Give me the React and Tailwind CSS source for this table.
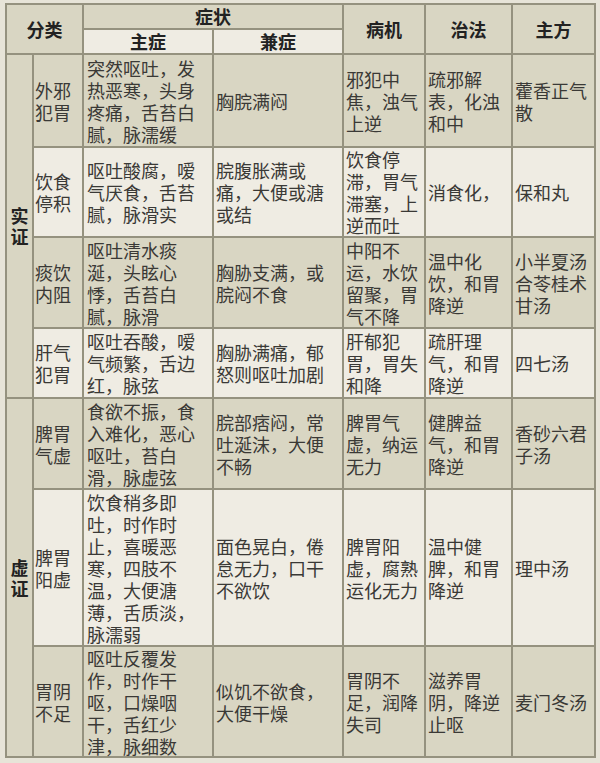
import React from "react";

const rows = [
  {
    name: ["外邪", "犯胃"],
    main: ["突然呕吐，发", "热恶寒，头身", "疼痛，舌苔白", "腻，脉濡缓"],
    side: ["胸脘满闷"],
    cause: ["邪犯中", "焦，浊气", "上逆"],
    cure: ["疏邪解", "表，化浊", "和中"],
    recipe: ["藿香正气", "散"],
    light: false,
  },
  {
    name: ["饮食", "停积"],
    main: ["呕吐酸腐，嗳", "气厌食，舌苔", "腻，脉滑实"],
    side: ["脘腹胀满或", "痛，大便或溏", "或结"],
    cause: ["饮食停", "滞，胃气", "滞塞，上", "逆而吐"],
    cure: ["消食化，"],
    recipe: ["保和丸"],
    light: true,
  },
  {
    name: ["痰饮", "内阻"],
    main: ["呕吐清水痰", "涎，头眩心", "悸，舌苔白", "腻，脉滑"],
    side: ["胸胁支满，或", "脘闷不食"],
    cause: ["中阳不", "运，水饮", "留聚，胃", "气不降"],
    cure: ["温中化", "饮，和胃", "降逆"],
    recipe: ["小半夏汤", "合苓桂术", "甘汤"],
    light: false,
  },
  {
    name: ["肝气", "犯胃"],
    main: ["呕吐吞酸，嗳", "气频繁，舌边", "红，脉弦"],
    side: ["胸胁满痛，郁", "怒则呕吐加剧"],
    cause: ["肝郁犯", "胃，胃失", "和降"],
    cure: ["疏肝理", "气，和胃", "降逆"],
    recipe: ["四七汤"],
    light: true,
  },
  {
    name: ["脾胃", "气虚"],
    main: ["食欲不振，食", "入难化，恶心", "呕吐，苔白", "滑，脉虚弦"],
    side: ["脘部痞闷，常", "吐涎沫，大便", "不畅"],
    cause: ["脾胃气", "虚，纳运", "无力"],
    cure: ["健脾益", "气，和胃", "降逆"],
    recipe: ["香砂六君", "子汤"],
    light: false,
  },
  {
    name: ["脾胃", "阳虚"],
    main: ["饮食稍多即", "吐，时作时", "止，喜暖恶", "寒，四肢不", "温，大便溏", "薄，舌质淡，", "脉濡弱"],
    side: ["面色晃白，倦", "怠无力，口干", "不欲饮"],
    cause: ["脾胃阳", "虚，腐熟", "运化无力"],
    cure: ["温中健", "脾，和胃", "降逆"],
    recipe: ["理中汤"],
    light: true,
  },
  {
    name: ["胃阴", "不足"],
    main: ["呕吐反覆发", "作，时作干", "呕，口燥咽", "干，舌红少", "津，脉细数"],
    side: ["似饥不欲食，", "大便干燥"],
    cause: ["胃阴不", "足，润降", "失司"],
    cure: ["滋养胃", "阴，降逆", "止呕"],
    recipe: ["麦门冬汤"],
    light: false,
  },
];

const Lines = ({ lines }) =>
  lines.map((l, i) => (
    <span key={i} className="block whitespace-nowrap">
      {l}
    </span>
  ));

const Cell = ({ lines, light, pad = "pl-[3px]" }) => (
  <div
    className={`flex items-center ${pad} text-[18px] leading-[22px] text-[#3a3936] ${
      light ? "bg-[#efece3]" : "bg-[#d9d6c3]"
    }`}
  >
    <div>
      <Lines lines={lines} />
    </div>
  </div>
);

const Head = ({ children, className = "" }) => (
  <div
    className={`flex items-center justify-center bg-[#d9d6c3] text-[18px] font-bold text-[#222] ${className}`}
  >
    {children}
  </div>
);

const Group = ({ label, span }) => (
  <div
    className={`flex flex-col items-center justify-center bg-[#d9d6c3] text-[18px] leading-[21px] font-bold text-[#222] ${span}`}
  >
    <Lines lines={label} />
  </div>
);

const App = () => {
  return (
    <div
      className="w-[600px] h-[763px] bg-[#e7e4d8] pt-[3px] pl-[5px] overflow-hidden"
      style={{ fontFamily: '"Noto Sans CJK SC", "Noto Sans", sans-serif' }}
    >
      <div className="grid w-[591px] grid-cols-[25px_48px_128px_128px_80px_85px_81px] grid-rows-[23px_23px_91px_88px_89px_68px_89px_155px_109px] gap-[2px] p-[2px] bg-[#95927f]">
        <Head className="col-span-2 row-span-2">分类</Head>
        <Head className="col-span-2">症状</Head>
        <Head className="row-span-2">病机</Head>
        <Head className="row-span-2">治法</Head>
        <Head className="row-span-2">主方</Head>
        <Head className="bg-[#efece3]">主症</Head>
        <Head className="bg-[#efece3]">兼症</Head>

        {rows.map((r, i) => (
          <React.Fragment key={i}>
            {i === 0 && <Group label={["实", "证"]} span="row-span-4" />}
            {i === 4 && <Group label={["虚", "证"]} span="row-span-3" />}
            <Cell lines={r.name} light={r.light} pad="pl-[1px]" />
            <Cell lines={r.main} light={r.light} />
            <Cell lines={r.side} light={r.light} pad="pl-[2px]" />
            <Cell lines={r.cause} light={r.light} pad="pl-[2px]" />
            <Cell lines={r.cure} light={r.light} pad="pl-[2px]" />
            <Cell lines={r.recipe} light={r.light} pad="pl-[2px]" />
          </React.Fragment>
        ))}
      </div>
    </div>
  );
};

export default App;
